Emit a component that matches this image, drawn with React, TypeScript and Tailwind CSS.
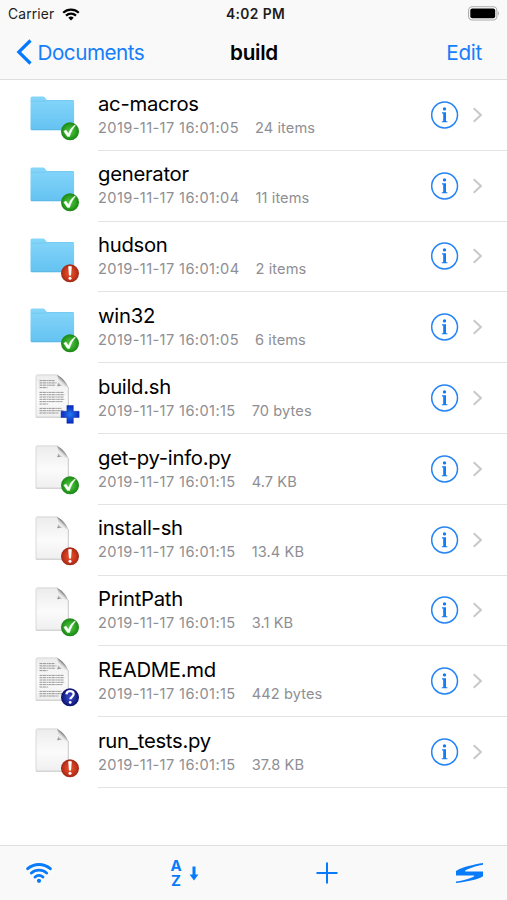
import React from 'react';

type Badge = 'ok' | 'alert' | 'plus' | 'question';
type Kind = 'folder' | 'blank' | 'text';

interface Entry {
  name: string;
  date: string;
  size: string;
  kind: Kind;
  badge: Badge;
}

const entries: Entry[] = [
  { name: 'ac-macros', date: '2019-11-17 16:01:05', size: '24 items', kind: 'folder', badge: 'ok' },
  { name: 'generator', date: '2019-11-17 16:01:04', size: '11 items', kind: 'folder', badge: 'ok' },
  { name: 'hudson', date: '2019-11-17 16:01:04', size: '2 items', kind: 'folder', badge: 'alert' },
  { name: 'win32', date: '2019-11-17 16:01:05', size: '6 items', kind: 'folder', badge: 'ok' },
  { name: 'build.sh', date: '2019-11-17 16:01:15', size: '70 bytes', kind: 'text', badge: 'plus' },
  { name: 'get-py-info.py', date: '2019-11-17 16:01:15', size: '4.7 KB', kind: 'blank', badge: 'ok' },
  { name: 'install-sh', date: '2019-11-17 16:01:15', size: '13.4 KB', kind: 'blank', badge: 'alert' },
  { name: 'PrintPath', date: '2019-11-17 16:01:15', size: '3.1 KB', kind: 'blank', badge: 'ok' },
  { name: 'README.md', date: '2019-11-17 16:01:15', size: '442 bytes', kind: 'text', badge: 'question' },
  { name: 'run_tests.py', date: '2019-11-17 16:01:15', size: '37.8 KB', kind: 'blank', badge: 'alert' },
];

function Gradients() {
  return (
    <svg className="absolute size-0" aria-hidden="true">
      <defs>
        <linearGradient id="folder" x1="0" y1="0" x2="0" y2="1">
          <stop offset="0" stopColor="#86d6fa" />
          <stop offset="1" stopColor="#64c2f1" />
        </linearGradient>
        <linearGradient id="paper" x1="0" y1="0" x2="0" y2="1">
          <stop offset="0" stopColor="#ececec" />
          <stop offset="0.55" stopColor="#fbfbfb" />
          <stop offset="1" stopColor="#efefef" />
        </linearGradient>
        <linearGradient id="curl" gradientUnits="userSpaceOnUse" x1="37.5" y1="18.5" x2="43.5" y2="12">
          <stop offset="0" stopColor="#5c5c5c" />
          <stop offset="0.3" stopColor="#b9b9b9" />
          <stop offset="0.5" stopColor="#f4f4f4" />
          <stop offset="0.75" stopColor="#d0d0d0" />
          <stop offset="1" stopColor="#7c7c7c" />
        </linearGradient>
        <radialGradient id="green">
          <stop offset="0" stopColor="#51c941" />
          <stop offset="0.65" stopColor="#2ba222" />
          <stop offset="1" stopColor="#1c8416" />
        </radialGradient>
        <radialGradient id="red">
          <stop offset="0" stopColor="#e9572f" />
          <stop offset="0.65" stopColor="#c9361b" />
          <stop offset="1" stopColor="#9c2a18" />
        </radialGradient>
        <radialGradient id="navy">
          <stop offset="0" stopColor="#3f50cf" />
          <stop offset="0.65" stopColor="#1c2795" />
          <stop offset="1" stopColor="#0c1166" />
        </radialGradient>
        <radialGradient id="blue">
          <stop offset="0" stopColor="#2377ee" />
          <stop offset="1" stopColor="#0928bd" />
        </radialGradient>
      </defs>
    </svg>
  );
}

function BadgeShape({ badge }: { badge: Badge }) {
  if (badge === 'plus') {
    return <path d="M46.9 37.5h6.4v5.8h5.8v6.2h-5.8v5.8h-6.4v-5.8h-5.8v-6.2h5.8z" fill="url(#blue)" stroke="#0a29ae" strokeWidth=".5" />;
  }
  const fill = badge === 'ok' ? 'url(#green)' : badge === 'alert' ? 'url(#red)' : 'url(#navy)';
  return (
    <g>
      <circle cx="50" cy="46.3" r="9" fill={fill} />
      {badge === 'ok' && <path d="m43.8 46.2 2.2-1.2 2.4 3.6c1.5-3.8 3.5-6.6 6.4-8.6l.6.6c-2.5 2.8-4.5 6.3-5.8 11h-2.2z" fill="#fff" stroke="#fff" strokeWidth=".4" />}
      {badge === 'alert' && (
        <g fill="#fff">
          <path d="M48.2 39.6q1.8-1.2 3.6 0l-.8 9h-2z" />
          <circle cx="50" cy="51.3" r="1.5" />
        </g>
      )}
      {badge === 'question' && (
        <g>
          <path d="M46.4 43.3c.3-2.3 1.7-3.1 3.6-3.1 2.2 0 3.7 1.1 3.7 2.9 0 2.7-3.4 2.6-3.4 5.2" fill="none" stroke="#fff" strokeWidth="2.2" />
          <circle cx="50.2" cy="51.4" r="1.4" fill="#fff" />
        </g>
      )}
    </g>
  );
}

function FileIcon({ kind, badge }: { kind: Kind; badge: Badge }) {
  return (
    <svg className="h-[60px] w-[60px] shrink-0" viewBox="0 0 60 60">
      {kind === 'folder' ? (
        <g>
          <path d="M10.5 13q0-1.6 1.6-1.6h11q1 0 1.6.8l1.7 2.3q.5.6 1.4.6h24.8q1.5 0 1.5 1.5v27.2q0 1.4-1.5 1.4H12q-1.5 0-1.5-1.5z" fill="url(#folder)" />
          <path d="M11 16.2h14.8q1-.6 2-.6h25.7" stroke="#72c5ec" strokeWidth=".8" fill="none" />
          <path d="M11 44.6h42.6" stroke="#5cb6e0" strokeWidth=".8" />
        </g>
      ) : (
        <g>
          <path d="M16 8.3q0-1.5 1.5-1.5H37q7 4.2 11.3 12.8v29.800H16z" fill="url(#paper)" />
          <path d="M16 49V8.2q0-1.3 1.4-1.3h20" fill="none" stroke="#d2d2d2" strokeWidth=".8" />
          <path d="M48.3 19v30.2H16" fill="none" stroke="#c6c6c6" strokeWidth="1" />
          <path d="M37 6.8c1.5 3.600 1.500 7.600.4 11.500 4.200-.6 8.200 0 11.100 1.600-1.800-5.200-6-10.200-11.500-13.100z" fill="url(#curl)" />
          {kind === 'text' && (
            <path
              d="M19.500 12.600h15M19.500 14.900h17M19.500 17.200h16M19.500 19.600h8M19.500 24.400h24M19.500 26.700h25M19.500 29h24M19.500 31.300h25M19.500 33.600h23M19.500 36h9M19.500 40.400h22M19.500 42.700h24M19.500 45h19"
              stroke="#8a8a8a"
              strokeWidth=".9"
              strokeDasharray="2.5 .5 3.4 .6 1.4 .5"
            />
          )}
        </g>
      )}
      <BadgeShape badge={badge} />
    </svg>
  );
}

function WifiIcon() {
  return (
    <svg className="mb-[2px] h-[21px] w-[26px]" viewBox="0 0 26 21" fill="none" stroke="currentColor" strokeWidth="2.9" strokeLinecap="round">
      <path d="M1.7 6.7a17.2 17.2 0 0 1 22.6 0M5.4 11a11.6 11.6 0 0 1 15.2 0M9.1 15a6 6 0 0 1 7.8 0" />
      <circle cx="13" cy="18.8" r="2.1" fill="currentColor" stroke="none" />
    </svg>
  );
}

function StatusWifi() {
  return (
    <svg className="ml-[7.5px] h-[13px] w-[18px]" viewBox="0 0 18 13" fill="none" stroke="#000" strokeWidth="2.2">
      <path d="M1.2 4.7a11.5 11.5 0 0 1 15.6 0M4 7.6a7.4 7.4 0 0 1 10 0" />
      <path d="M6.3 9.7a4 4 0 0 1 5.4 0L9 12.4z" fill="#000" stroke="none" />
    </svg>
  );
}

function Row({ entry }: { entry: Entry }) {
  return (
    <li className="flex h-[70.8px] items-start">
      <div className="w-[98px] shrink-0 pl-5 pt-[5px]">
        <FileIcon kind={entry.kind} badge={entry.badge} />
      </div>
      <div className="flex h-full flex-1 items-start border-b border-[#e3e3e5]">
        <div className="w-[332px] pt-[10.7px]">
          <div className="h-[26px] text-[20.3px] leading-[26px] tracking-[-0.28px] text-black">{entry.name}</div>
          <div className="flex gap-4 text-[14.6px] leading-[22px] text-[#8e8e93]">
            <span className="tracking-[0.4px]">{entry.date}</span>
            <span className="tracking-[0.1px]">{entry.size}</span>
          </div>
        </div>
        <svg className="mt-[19.8px] h-[30px] w-[60px]" viewBox="0 0 60 30" fill="none">
          <circle cx="14.6" cy="15" r="12.9" stroke="#2584f6" strokeWidth="1.5" />
          <circle cx="14.5" cy="8.9" r="1.7" fill="#147cf5" />
          <path d="M12 12.3h4v8.9h1.4v1.1h-5.6v-1.1h1.4v-7.8H12z" fill="#147cf5" />
          <path d="m43.7 8.2 7.2 6.8-7.2 6.8" stroke="#c7c7cc" strokeWidth="2" />
        </svg>
      </div>
    </li>
  );
}

export default function App() {
  return (
    <div className="flex h-[900px] w-[507px] flex-col overflow-hidden bg-white font-['Inter','Liberation_Sans',sans-serif]">
      <Gradients />
      <header className="h-[80px] shrink-0 border-b border-[#dfdfe0] bg-[#f9f9f9]">
        <div className="grid h-[27px] grid-cols-3 items-center px-2 text-[13.8px] text-[#1c1c1c]">
          <div className="flex items-center pt-px">
            <span className="tracking-[0.15px]">Carrier</span>
            <StatusWifi />
          </div>
          <span className="pl-1 pt-px text-center font-semibold tracking-[0.4px]">4:02 PM</span>
          <svg className="h-[15px] w-[34px] justify-self-end" viewBox="0 0 34 15">
            <rect x="3.6" y=".8" width="28.3" height="13.2" rx="3.7" fill="#fff" stroke="#aaa" strokeWidth="1.1" />
            <rect x="5.3" y="2.5" width="24.9" height="9.8" rx="2" fill="#000" />
            <path d="M33 5.2q1.5 2.2 0 4.4z" fill="#999" />
          </svg>
        </div>
        <div className="grid h-[51px] grid-cols-3 items-center text-[20.7px] text-[#167efb]">
          <div className="flex items-center pl-4">
            <svg className="h-7 w-[17px]" viewBox="0 0 17 28" fill="none">
              <path d="M14.5 2.5 2.8 14l11.7 11.5" stroke="#067aff" strokeWidth="3.2" />
            </svg>
            <span className="ml-[4.5px] tracking-[-0.5px]">Documents</span>
          </div>
          <h1 className="pl-px text-center font-semibold tracking-[-0.3px] text-black">build</h1>
          <span className="pr-[25px] text-right tracking-[-0.3px]">Edit</span>
        </div>
      </header>

      <ul className="flex-1">
        {entries.map((entry) => (
          <Row key={entry.name} entry={entry} />
        ))}
      </ul>

      <footer className="flex h-[55px] shrink-0 items-center border-t border-[#dfdfe0] bg-[#f9f9f9] pl-[26px] text-[#087bfb]">
        <WifiIcon />
        <div className="ml-[118px] flex items-center gap-[7px]">
          <div className="w-3 text-center text-[15px] font-bold leading-[15.5px]">
            A<br />Z
          </div>
          <svg className="h-[15px] w-[10px]" viewBox="0 0 10 15">
            <path d="M3.500.5h3v8h2.900L5 14.600.6 8.500h2.900z" fill="currentColor" />
          </svg>
        </div>
        <svg className="ml-[117px] h-[22px] w-[22px]" viewBox="0 0 22 22" stroke="currentColor" strokeWidth="2">
          <path d="M11 .5v21M.5 11h21" />
        </svg>
        <svg className="ml-[117.500px] h-[20px] w-[27px]" viewBox="0 0 27 20" fill="currentColor">
          <path d="M27 0C18 1.500 6 4 0 8v4.600h17c1.500 0 2 .6 0 1.400-6 2.500-12 3.800-17 4.600V20c12-1.500 22-3.500 27-6.800V8.600H11C8.500 8.600 8.500 7.500 11 6.500 16 4.200 22 2.600 27 1.700z" />
        </svg>
      </footer>
    </div>
  );
}
